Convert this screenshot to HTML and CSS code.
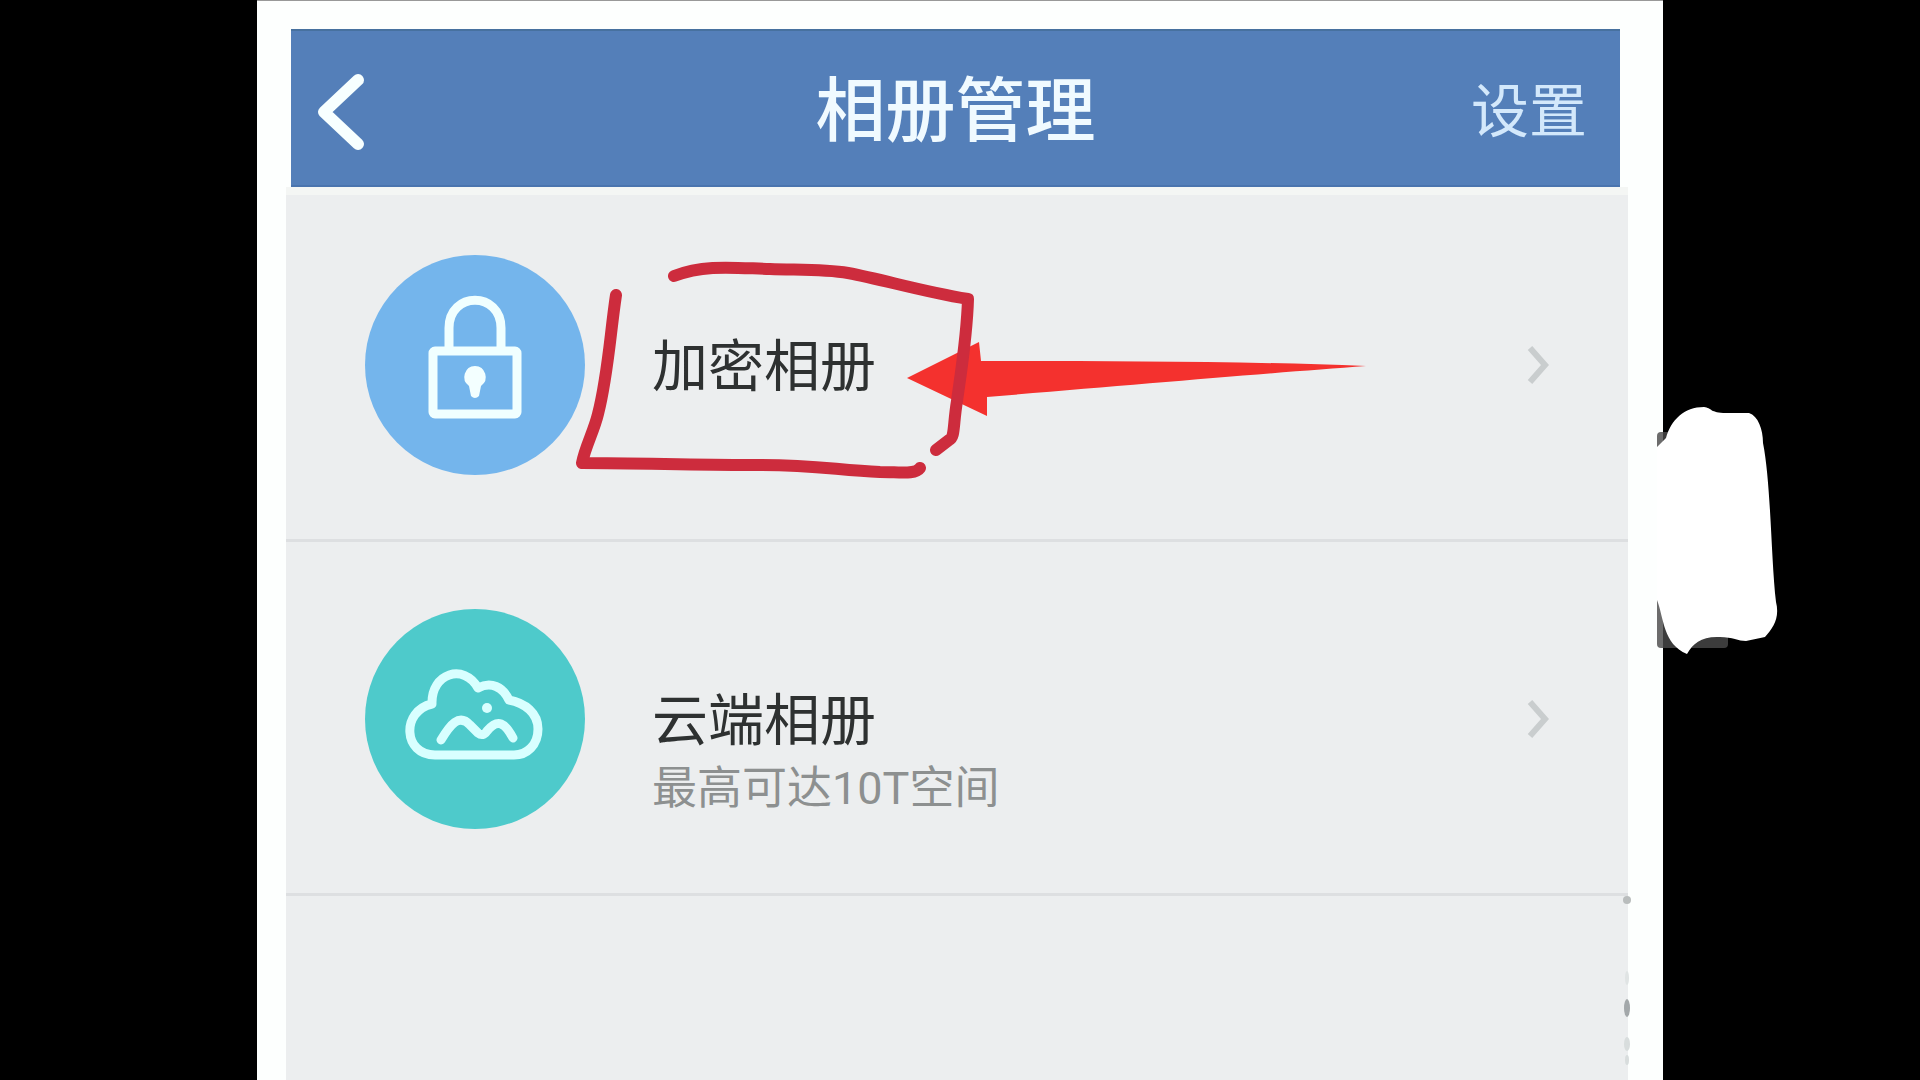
FILE: index.html
```html
<!DOCTYPE html>
<html lang="zh-CN">
<head>
  <meta charset="UTF-8">
  <title>相册管理</title>
  <link rel="stylesheet" href="styles.css">
</head>
<body>

<div class="frame">
  <header class="topbar">
    <button class="back" aria-label="返回">
      <svg width="52" height="80" viewBox="0 0 52 80">
        <path d="M43 8 L9 40 L43 72" />
      </svg>
    </button>
    <h1>相册管理</h1>
    <button class="settings">设置</button>
  </header>

  <main class="panel">
    <a class="row" href="#">
      <svg class="icon" viewBox="0 0 220 220">
        <circle cx="110" cy="110" r="110" fill="#74b5ec" />
        <g class="line">
          <path d="M84 92 V73 C84 36 136 36 136 73 V92" />
          <rect x="68" y="96" width="84" height="63" rx="2" />
        </g>
        <path d="M110 111 a11 11 0 0 1 6 20 l-2 10 q-4 4 -8 0 l-2 -10 a11 11 0 0 1 6 -20z" fill="#f3ffff" />
      </svg>
      <div class="text">
        <div class="name">加密相册</div>
      </div>
      <svg class="arrow" viewBox="0 0 28 44"><path d="M6 5 L21 22 L6 39" /></svg>

      <!-- hand drawn mark and pointer -->
      <svg class="mark" width="810" height="230" viewBox="570 255 810 230">
        <path class="pointer" d="M907 378 L979 342 L981 361 C1100 361 1240 361 1366 366 C1270 373 1130 385 987 397 L987 416 Z" />
        <path class="stroke" d="M674 276 C705 264 735 268 770 269 C800 270 825 269 848 273 C885 280 920 291 968 299 C967 335 962 365 957 401 C953 425 955 438 949 440 L936 450" />
        <path class="stroke" d="M616 295 C610 335 608 375 598 414 C594 431 585 447 582 463 C640 463 690 465 750 465 C810 464 835 470 880 472 C900 472 915 475 920 468" />
      </svg>
    </a>

    <a class="row" href="#">
      <svg class="icon" viewBox="0 0 220 220">
        <circle cx="110" cy="110" r="110" fill="#4ecacb" />
        <g class="line cloud">
          <path d="M70 146 C38 146 36 102 67 95 C66 64 99 54 113 79 C126 72 138 78 144 91 C160 94 173 104 173 120 C173 136 162 146 149 146 Z" />
          <path d="M76 131 C85 116 94 104 105 116 L113 124 Q118 128 122 122 C133 109 140 114 148 129" />
        </g>
        <circle cx="122" cy="99" r="5" fill="#d8ffff" />
      </svg>
      <div class="text">
        <div class="name">云端相册</div>
        <div class="note">最高可达10T空间</div>
      </div>
      <svg class="arrow" viewBox="0 0 28 44"><path d="M6 5 L21 22 L6 39" /></svg>
    </a>

    <!-- specks along the right edge -->
    <svg class="specks" width="12" height="180" viewBox="0 0 12 180">
      <ellipse cx="5" cy="10" rx="4" ry="4" fill="#b9bdbd" />
      <ellipse cx="5" cy="88" rx="2" ry="7" fill="#e0e4e4" />
      <ellipse cx="5" cy="118" rx="3" ry="9" fill="#a3a8aa" />
      <ellipse cx="5" cy="154" rx="3" ry="7" fill="#d8dddd" />
      <ellipse cx="5" cy="170" rx="2" ry="5" fill="#d8dddd" />
    </svg>
  </main>

  <svg class="blob" width="124" height="260" viewBox="1656 400 124 260">
    <rect x="1657" y="432" width="71" height="216" rx="4" fill="#4a4a4a" fill-opacity="0.81" />
    <path d="M1657 447 L1666 438 C1671 420 1684 407 1704 407 C1712 408 1710 413 1726 413 H1749 C1758 416 1763 429 1763 443 C1771 483 1771 560 1776 602 C1780 618 1773 628 1765 637 L1746 641 C1738 641 1733 637 1720 637 C1702 636 1693 643 1687 654 C1663 644 1664 618 1657 600 Z" fill="#fff" />
  </svg>
</div>

</body>
</html>
```
FILE: styles.css
```css
* {
  box-sizing: border-box;
}

body {
  margin: 0;
  background: #000;
  font-family: Roboto, "Noto Sans CJK SC", sans-serif;
}

.frame {
  position: relative;
  display: flex;
  flex-direction: column;
  min-height: 100vh;
  margin: 0 257px;
  padding-top: 28px;
  background: #fdfffe;
  border-top: 1px solid #999;
}

.topbar {
  display: grid;
  grid-template-columns: 1fr auto 1fr;
  align-items: center;
  height: 158px;
  margin: 0 43px 0 34px;
  padding: 8px 24px 0;
  background: #547fb9;
  border-top: 2px solid #47719f;
  border-bottom: 2px solid #4a74ae;
}

h1 {
  margin: 0;
  color: #f0faff;
  font-size: 70px;
  font-weight: 500;
  line-height: 96px;
}

button {
  padding: 0;
  background: none;
  border: none;
  font-family: inherit;
  cursor: pointer;
}

.back {
  display: flex;
  justify-self: start;
}

.back path {
  fill: none;
  stroke: #f7ffff;
  stroke-width: 12;
  stroke-linecap: round;
  stroke-linejoin: round;
}

.settings {
  justify-self: end;
  padding-right: 9px;
  color: #d3e8fb;
  font-size: 58px;
  line-height: 80px;
}

.panel {
  position: relative;
  flex: 1;
  margin: 0 35px 0 29px;
  background: #eceeef;
  border-top: 8px solid #f4f6f4;
}

.row {
  position: relative;
  display: flex;
  gap: 67px;
  padding: 67px 76px 64px 79px;
  border-bottom: 3px solid #dddfe1;
  color: #2e3131;
  text-decoration: none;
}

.row:first-child {
  padding-top: 60px;
}

.icon {
  width: 220px;
  height: 220px;
  flex: none;
}

.line {
  fill: none;
  stroke: #f0ffff;
  stroke-width: 9;
  stroke-linejoin: round;
}

.cloud {
  stroke: #d8ffff;
  stroke-linecap: round;
}

.text {
  flex: 1;
  padding-top: 76px;
}

.name {
  font-size: 56px;
  line-height: 72px;
}

.note {
  color: #8d9090;
  font-size: 45px;
  line-height: 64px;
}

.arrow {
  width: 28px;
  height: 44px;
  align-self: center;
}

.arrow path {
  fill: none;
  stroke: #c9cdce;
  stroke-width: 6;
}

.mark {
  position: absolute;
  left: 284px;
  top: 60px;
}

.pointer {
  fill: #f4312e;
}

.stroke {
  fill: none;
  stroke: #cd2c3d;
  stroke-width: 12;
  stroke-linecap: round;
  stroke-linejoin: round;
}

.specks {
  position: absolute;
  right: -6px;
  top: 695px;
}

.blob {
  position: absolute;
  right: -117px;
  top: 399px;
}
```
